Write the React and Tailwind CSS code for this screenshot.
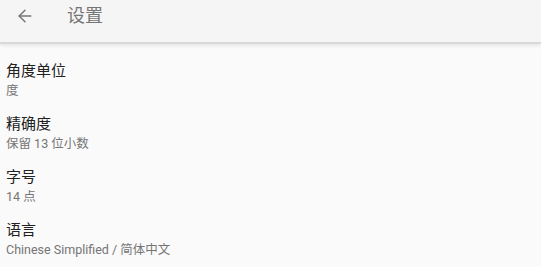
import { ArrowLeft } from 'lucide-react';

const items = [
  { title: '角度单位', value: '度' },
  { title: '精确度', value: '保留 13 位小数' },
  { title: '字号', value: '14 点' },
  { title: '语言', value: 'Chinese Simplified / 简体中文' },
];

const font = { fontFamily: 'Roboto, "Noto Sans CJK SC", sans-serif' };

export default function App() {
  return (
    <div className="w-[541px] h-[267px] bg-[#fafafa] overflow-hidden" style={font}>
      {/* Toolbar */}
      <div className="h-[44px] bg-[#f5f5f5] border-b-2 border-[#d9d9d9] shadow-[0_2px_3px_rgba(0,0,0,0.08)]">
        <div className="h-[32px] flex items-center">
          <button className="ml-[14px] w-[22px] h-[22px] flex items-center justify-center text-[#757575]">
            <ArrowLeft size={20} strokeWidth={1.75} />
          </button>
          <span className="ml-[31px] text-[18px] text-[#757575] leading-none">设置</span>
        </div>
      </div>

      {/* Settings list */}
      <div className="flex flex-col pt-[17px]">
        {items.map((item) => (
          <div key={item.title} className="h-[53px] px-[6px] flex flex-col">
            <div className="text-[15px] leading-[20px] text-[#212121]">{item.title}</div>
            <div className="mt-[1px] text-[12.5px] leading-[18px] text-[#757575]">{item.value}</div>
          </div>
        ))}
      </div>
    </div>
  );
}
